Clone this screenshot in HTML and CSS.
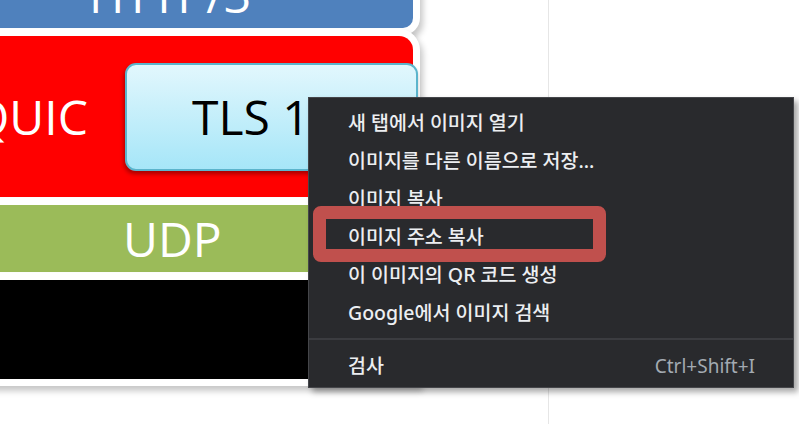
FILE: index.html
```html
<!DOCTYPE html>
<html lang="ko">
<head>
<meta charset="utf-8">
<link rel="stylesheet" href="styles.css">
</head>
<body>
<div class="page">
  <div class="left">
    <div class="diagram">
      <div class="box http"><span class="label">HTTP/3</span></div>
      <div class="box quic">
        <span class="label quic-label">QUIC</span>
        <div class="tls"><span class="label tls-label">TLS 1.3</span></div>
      </div>
      <div class="box udp"><span class="label">UDP</span></div>
      <div class="box ip"></div>
    </div>
  </div>
  <div class="right"></div>

  <div class="menu">
    <div class="item">새 탭에서 이미지 열기</div>
    <div class="item">이미지를 다른 이름으로 저장...</div>
    <div class="item">이미지 복사</div>
    <div class="item">이미지 주소 복사</div>
    <div class="item">이 이미지의 QR 코드 생성</div>
    <div class="item">Google에서 이미지 검색</div>
    <div class="sep"></div>
    <div class="item split"><span>검사</span><span class="shortcut">Ctrl+Shift+I</span></div>
    <div class="highlight"></div>
  </div>
</div>
</body>
</html>
```

FILE: styles.css
```css
html, body {
  margin: 0;
  padding: 0;
  background: #ffffff;
}

.page {
  position: relative;
  width: 799px;
  height: 424px;
  overflow: hidden;
  display: flex;
}

.left {
  width: 548px;
  flex: none;
}

.right {
  flex: 1;
  border-left: 1px solid #e6e6e6;
}

.diagram {
  margin-left: -40px;
  margin-top: -50px;
  width: 453px;
  display: flex;
  flex-direction: column;
  gap: 8px;
  font-family: "Open Sans", "Liberation Sans", sans-serif;
}

.box {
  position: relative;
  box-shadow: 0 0 0 7px #ffffff, 3px 5px 6px 7px rgba(0, 0, 0, 0.22);
}

.label {
  font-size: 48px;
  line-height: 48px;
  color: #ffffff;
  white-space: nowrap;
}

.http {
  height: 78px;
  background: #4f81bd;
  border-bottom-right-radius: 10px;
  display: flex;
  align-items: flex-end;
  padding-left: 129px;
  padding-bottom: 9px;
  box-sizing: border-box;
}

.quic {
  height: 161px;
  background: #ff0000;
  border-top-right-radius: 14px;
  display: flex;
  align-items: center;
}

.quic-label {
  flex: none;
  width: 165px;
  padding-left: 12px;
  box-sizing: border-box;
}

.tls {
  flex: none;
  width: 293px;
  height: 108px;
  box-sizing: border-box;
  border: 2px solid #5bb4cc;
  border-radius: 11px;
  background: linear-gradient(#e2f7fd, #a6e6f8);
  box-shadow: -1px 3px 4px rgba(0, 0, 0, 0.35);
  display: flex;
  align-items: center;
  padding-left: 65px;
}

.tls-label {
  color: #000000;
}

.udp {
  height: 67px;
  background: #9bbb59;
  display: flex;
  align-items: center;
  padding-left: 163px;
  box-sizing: border-box;
}

.ip {
  height: 99px;
  background: #000000;
}

.menu {
  position: absolute;
  left: 308px;
  top: 97px;
  width: 486px;
  height: 291px;
  box-sizing: border-box;
  background: #292a2d;
  border: 1px solid #45464a;
  box-shadow: 4px 4px 6px rgba(0, 0, 0, 0.35);
  padding-top: 6px;
  font-family: "Noto Sans", "Noto Sans CJK KR", sans-serif;
  font-size: 19.5px;
  font-weight: 500;
  color: #eceef1;
}

.item {
  height: 38px;
  line-height: 38px;
  padding-left: 39px;
  padding-right: 38px;
  white-space: nowrap;
}

.split {
  display: flex;
  justify-content: space-between;
}

.shortcut {
  color: #a3aab2;
  font-weight: 400;
  font-size: 19px;
}

.sep {
  height: 2px;
  background: #3b3c40;
  margin: 6px 0 7px;
}

.highlight {
  position: absolute;
  left: 4px;
  top: 108px;
  width: 293px;
  height: 56px;
  box-sizing: border-box;
  border: 13px solid #c0504d;
  border-radius: 8px;
}
```
